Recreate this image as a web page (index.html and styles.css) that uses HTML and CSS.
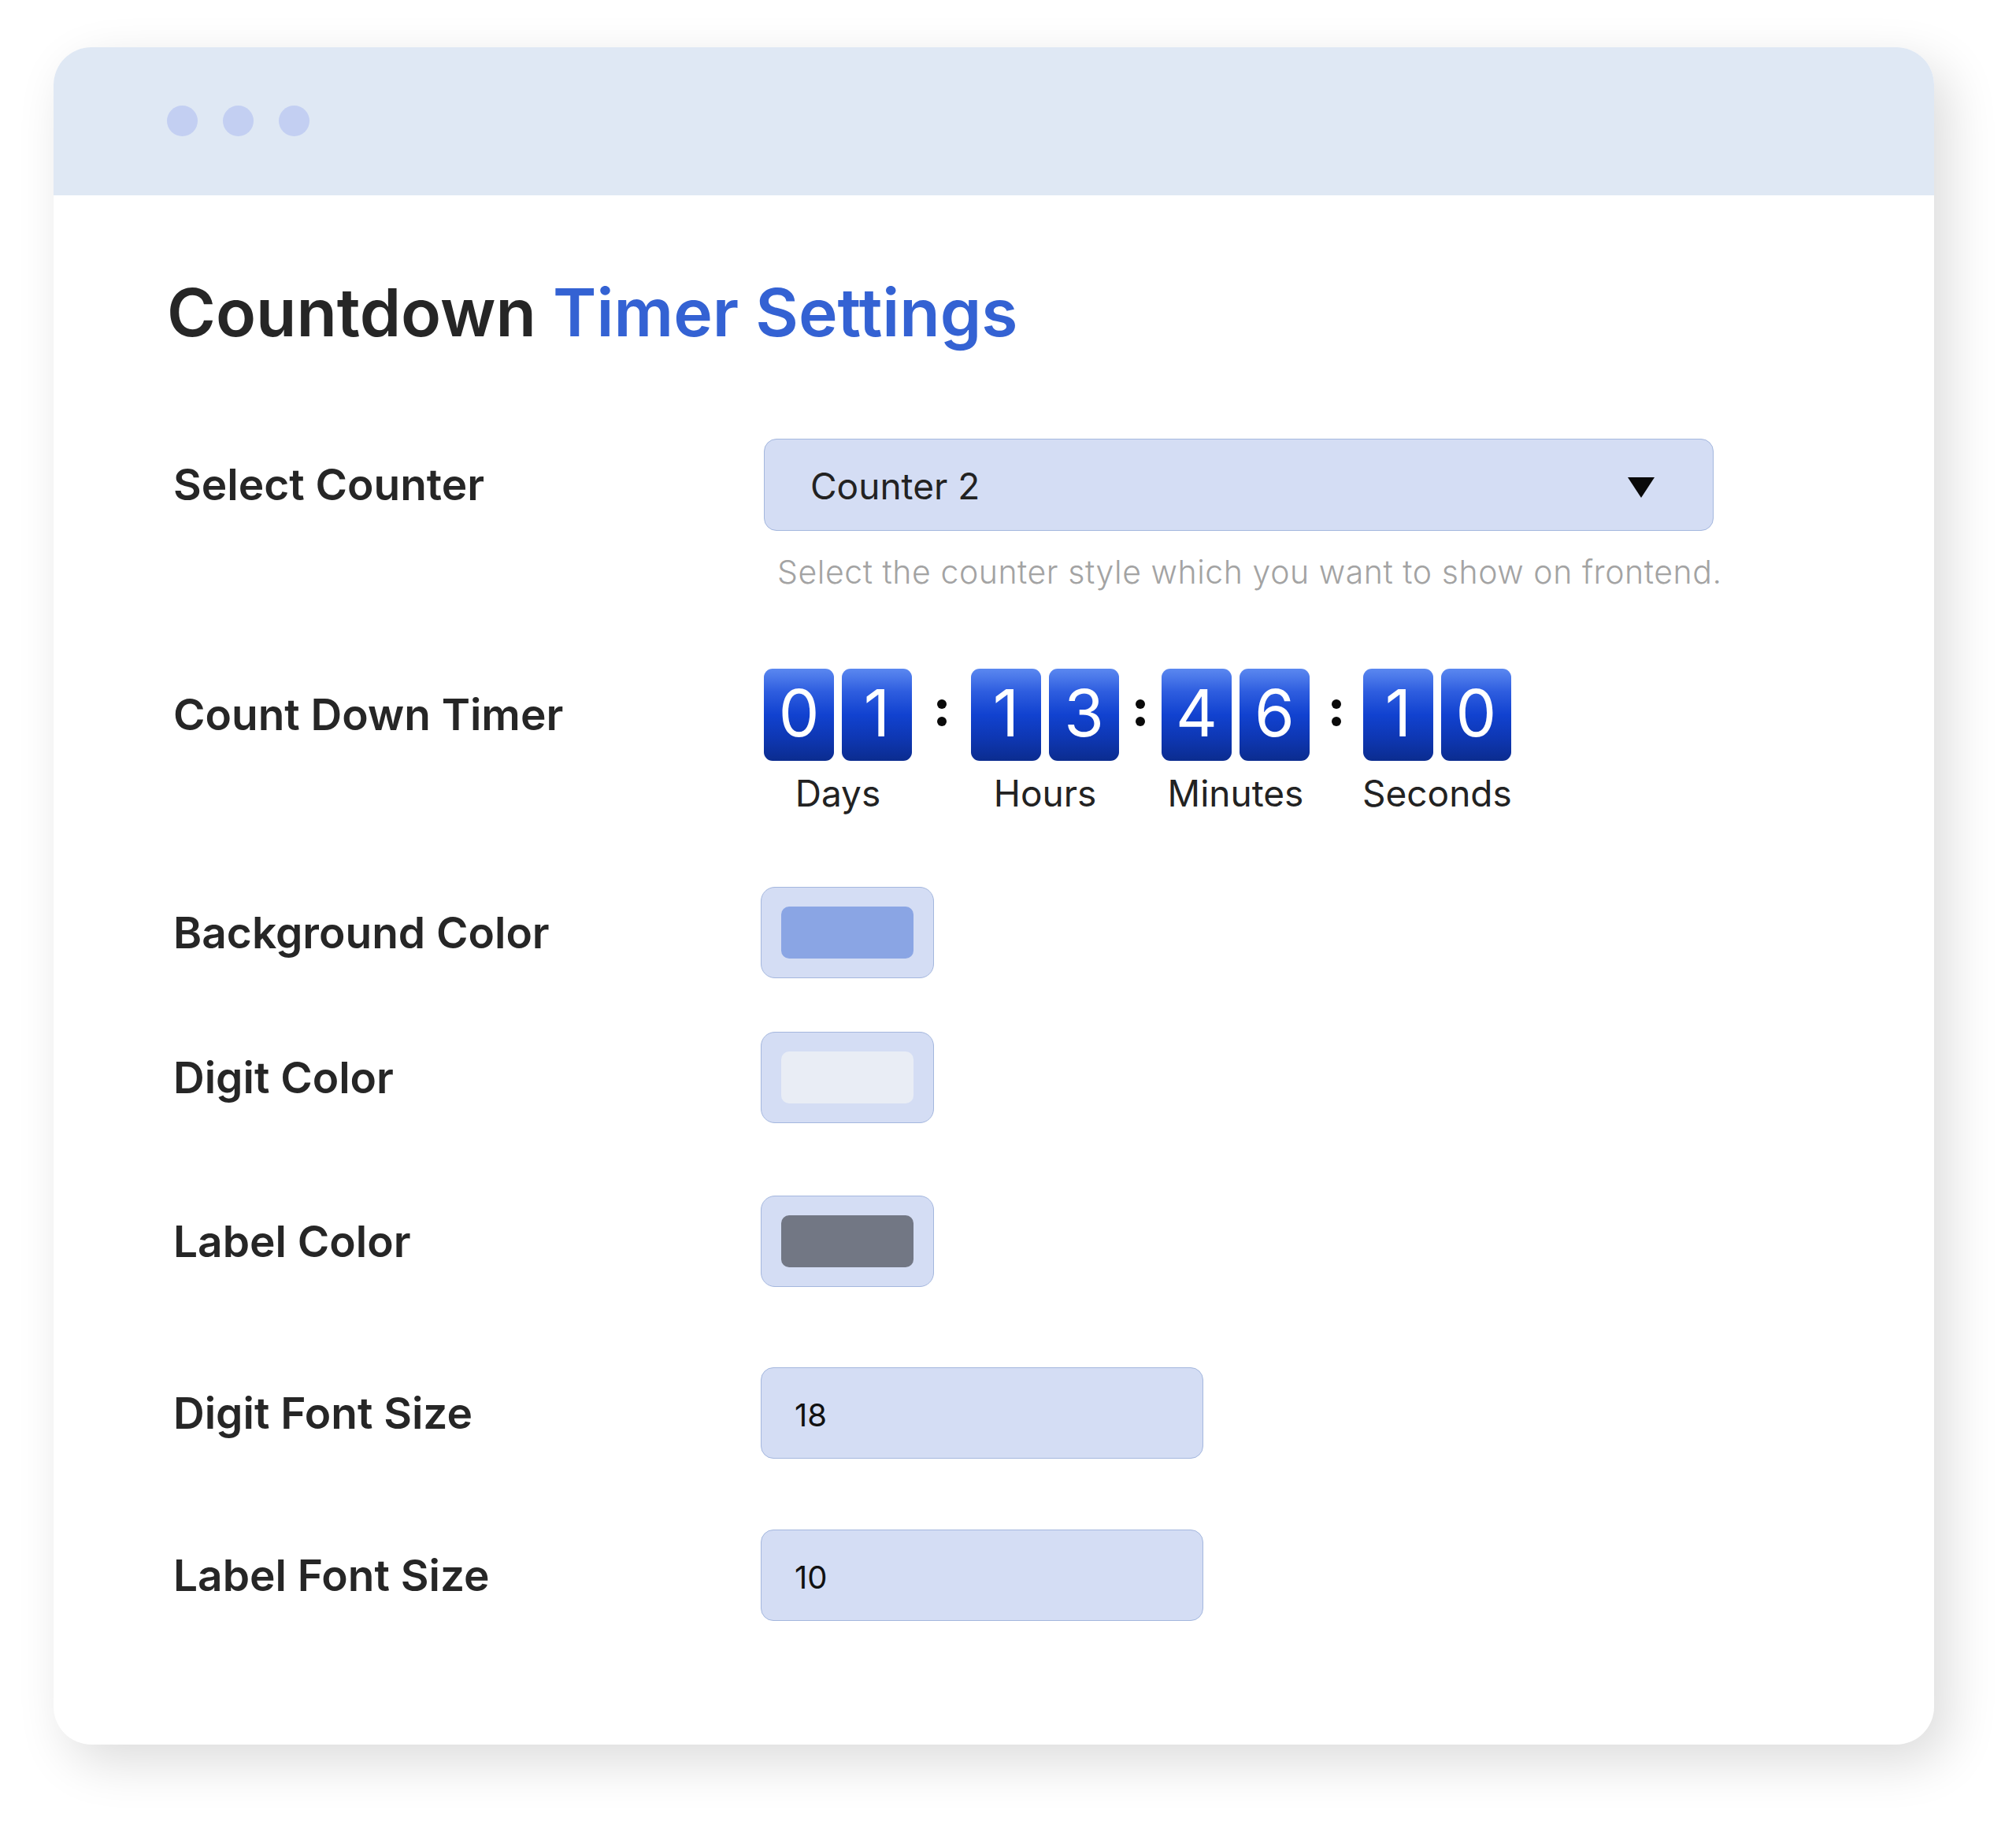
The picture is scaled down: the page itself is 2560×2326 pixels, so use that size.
FILE: index.html
```html
<!DOCTYPE html>
<html lang="en">
<head>
<meta charset="utf-8">
<title>Countdown Timer Settings</title>
<link rel="stylesheet" href="styles.css">
</head>
<body>
<div class="window">
  <div class="titlebar">
    <span class="dot"></span><span class="dot"></span><span class="dot"></span>
  </div>
  <div class="content">
    <h1 class="title">Countdown <span class="accent">Timer Settings</span></h1>

    <div class="row row-select">
      <div class="label">Select Counter</div>
      <div class="control">
        <div class="select">
          <span class="select-value">Counter 2</span>
          <svg class="caret" width="34" height="26" viewBox="0 0 34 26"><polygon points="0,0 34,0 17,26" fill="#0a0a0a"/></svg>
        </div>
        <div class="help">Select the counter style which you want to show on frontend.</div>
      </div>
    </div>

    <div class="row row-timer">
      <div class="label">Count Down Timer</div>
      <div class="control timer">
        <div class="unit">
          <div class="digits"><span class="digit">0</span><span class="digit">1</span></div>
          <div class="unit-label">Days</div>
        </div>
        <div class="sep sep-1"><span></span><span></span></div>
        <div class="unit">
          <div class="digits"><span class="digit">1</span><span class="digit">3</span></div>
          <div class="unit-label">Hours</div>
        </div>
        <div class="sep sep-2"><span></span><span></span></div>
        <div class="unit">
          <div class="digits"><span class="digit">4</span><span class="digit">6</span></div>
          <div class="unit-label">Minutes</div>
        </div>
        <div class="sep sep-3"><span></span><span></span></div>
        <div class="unit">
          <div class="digits"><span class="digit">1</span><span class="digit">0</span></div>
          <div class="unit-label">Seconds</div>
        </div>
      </div>
    </div>

    <div class="row row-bg">
      <div class="label">Background Color</div>
      <div class="control"><div class="picker"><span class="swatch swatch-bg"></span></div></div>
    </div>

    <div class="row row-digit">
      <div class="label">Digit Color</div>
      <div class="control"><div class="picker"><span class="swatch swatch-digit"></span></div></div>
    </div>

    <div class="row row-labelc">
      <div class="label">Label Color</div>
      <div class="control"><div class="picker"><span class="swatch swatch-label"></span></div></div>
    </div>

    <div class="row row-dfs">
      <div class="label">Digit Font Size</div>
      <div class="control"><div class="input">18</div></div>
    </div>

    <div class="row row-lfs">
      <div class="label">Label Font Size</div>
      <div class="control"><div class="input">10</div></div>
    </div>
  </div>
</div>
</body>
</html>
```

FILE: styles.css
```css
* { box-sizing: border-box; }

html, body {
  margin: 0;
  background: #ffffff;
}

body {
  padding: 60px 104px 110px 68px;
  font-family: "Inter", "Liberation Sans", sans-serif;
  color: #262626;
}

.window {
  background: #ffffff;
  border-radius: 48px;
  box-shadow: 18px 22px 65px rgba(0, 0, 0, 0.14);
  overflow: hidden;
}

.titlebar {
  height: 188px;
  background: #dfe8f4;
  display: flex;
  align-items: center;
  gap: 32px;
  padding-left: 144px;
  padding-bottom: 2px;
}

.dot {
  width: 39px;
  height: 39px;
  border-radius: 50%;
  background: #c3cff2;
}

.content {
  padding: 107px 0 157px 152px;
}

.title {
  margin: 0 0 0 -8px;
  font-size: 84px;
  line-height: 1;
  font-weight: 600;
  color: #262626;
}

.accent { color: #3462d3; }

.row {
  display: grid;
  grid-template-columns: 746px 1fr;
  align-items: start;
}

.row-select { margin-top: 118px; }
.row-timer  { margin-top: 102px; }
.row-bg     { margin-top: 96px; }
.row-digit  { margin-top: 68px; }
.row-labelc { margin-top: 92px; }
.row-dfs    { margin-top: 102px; }
.row-lfs    { margin-top: 90px; }

.label {
  height: 116px;
  display: flex;
  align-items: center;
  font-size: 55px;
  line-height: 1;
  font-weight: 600;
  color: #262626;
}

.row-select .label, .row-timer .label { height: 117px; }

.select {
  margin-left: 4px;
  width: 1206px;
  height: 117px;
  background: #d4ddf4;
  border: 1.5px solid #a4b7de;
  border-radius: 16px;
  display: flex;
  align-items: center;
  justify-content: space-between;
  padding: 0 74px 0 58px;
}

.select-value {
  font-size: 46px;
  line-height: 1;
  color: #222222;
  padding-top: 3px;
}

.caret { display: block; margin-top: 6px; }

.help {
  margin: 32px 0 0 21px;
  font-size: 41px;
  line-height: 1;
  font-weight: 300;
  letter-spacing: 0.55px;
  color: #a3a3a3;
  white-space: nowrap;
}

.timer {
  display: flex;
  align-items: flex-start;
  padding-left: 4px;
}

.unit {
  display: flex;
  flex-direction: column;
  align-items: center;
}

.digits {
  display: flex;
  gap: 10px;
}

.digit {
  width: 89px;
  height: 117px;
  border-radius: 11px;
  background: linear-gradient(180deg, #5b88f0 0%, #2e5ddf 25%, #1142d0 50%, #0e37b3 75%, #0b2c8f 100%);
  color: #ffffff;
  font-size: 82px;
  line-height: 1;
  font-weight: 400;
  display: flex;
  align-items: center;
  justify-content: center;
  padding-bottom: 4px;
}

.unit-label {
  margin-top: 18px;
  font-size: 46px;
  line-height: 1;
  color: #222222;
  white-space: nowrap;
}

.sep {
  height: 117px;
  display: flex;
  flex-direction: column;
  align-items: center;
  justify-content: center;
  gap: 10px;
  padding-bottom: 6px;
}
.sep span {
  width: 12px;
  height: 12px;
  border-radius: 50%;
  background: #0a0a0a;
}
.sep-1 { width: 75px; }
.sep-2 { width: 54px; }
.sep-3 { width: 67px; }

.picker {
  width: 220px;
  height: 116px;
  padding: 24px 25px;
  background: #d4ddf4;
  border: 1.5px solid #a4b7de;
  border-radius: 18px;
}

.swatch {
  display: block;
  width: 100%;
  height: 100%;
  border-radius: 10px;
}
.swatch-bg { background: #8aa5e4; }
.swatch-digit { background: #e9edf5; }
.swatch-label { background: #727784; }

.input {
  width: 562px;
  height: 116px;
  background: #d4ddf4;
  border: 1.5px solid #a4b7de;
  border-radius: 16px;
  display: flex;
  align-items: center;
  padding: 6px 0 0 42px;
  font-size: 40px;
  line-height: 1;
  color: #111111;
}
```
